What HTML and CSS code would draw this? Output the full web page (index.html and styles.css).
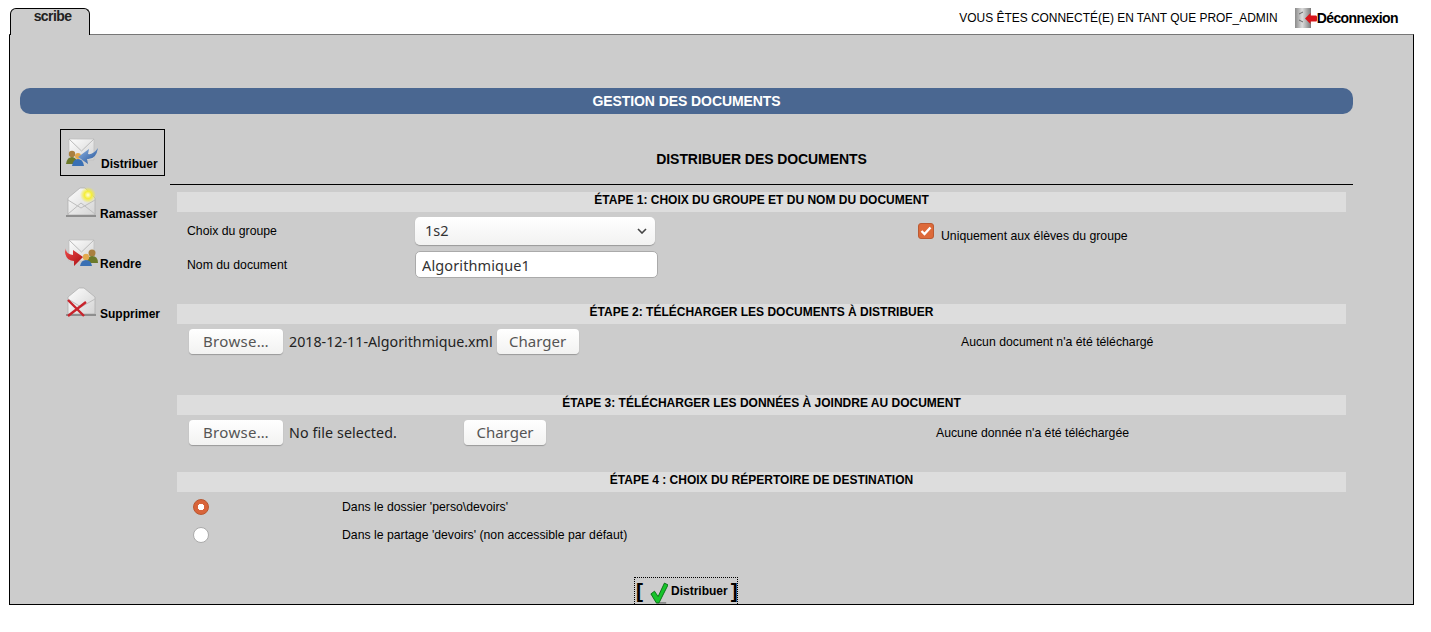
FILE: index.html
```html
<!DOCTYPE html>
<html lang="fr">
<head>
<meta charset="utf-8">
<title>Gestion des documents</title>
<link rel="stylesheet" href="styles.css">
</head>
<body>
<svg class="defs" width="0" height="0" aria-hidden="true">
  <defs>
    <linearGradient id="env" x1="0" y1="0" x2="1" y2="1"><stop offset="0" stop-color="#fdfdfd"/><stop offset="1" stop-color="#d4d4d4"/></linearGradient>
    <linearGradient id="blue" x1="0" y1="0" x2="1" y2="1"><stop offset="0" stop-color="#8fb4e2"/><stop offset="1" stop-color="#1f4f96"/></linearGradient>
    <linearGradient id="red" x1="0" y1="0" x2="1" y2="1"><stop offset="0" stop-color="#ee4a4a"/><stop offset="1" stop-color="#a80f12"/></linearGradient>
    <linearGradient id="door" x1="0" y1="0" x2="1" y2="0"><stop offset="0" stop-color="#8a8a8a"/><stop offset=".45" stop-color="#dcdcdc"/><stop offset="1" stop-color="#7a7a7a"/></linearGradient>
    <radialGradient id="star"><stop offset="0" stop-color="#fffde0"/><stop offset=".45" stop-color="#f5ee3a"/><stop offset="1" stop-color="#f5ee3a" stop-opacity="0"/></radialGradient>
  </defs>
</svg>
<header class="top">
  <div class="tab">scribe</div>
  <div class="user">
    <span class="connected">VOUS ÊTES CONNECTÉ(E) EN TANT QUE PROF_ADMIN</span>
    <a class="logout" href="#">
      <svg width="22" height="21" viewBox="0 0 22 21">
        <rect x="0" y="0" width="16" height="20" fill="url(#door)"/>
        <path d="M4 12 L8 14 M4 6 L8 4" stroke="#666" stroke-width="1"/>
        <path d="M10 10.5 L15.5 5 V7.5 H21 Q22 7.5 22 9 V12 Q22 13.5 21 13.5 H15.5 V16Z" fill="#d7141a"/>
      </svg><span>Déconnexion</span>
    </a>
  </div>
</header>
<main class="panel">
  <h1 class="banner">GESTION DES DOCUMENTS</h1>
  <div class="columns">
    <nav class="side">
      <a class="side-item active" href="#">
        <svg width="34" height="30" viewBox="0 0 34 30">
          <path d="M3 1 H28 V22 H3Z" fill="url(#env)" stroke="#bbb" stroke-width=".7"/>
          <path d="M3 1 L15.5 13 L28 1" fill="none" stroke="#bbb"/>
          <circle cx="6" cy="16" r="3.2" fill="#a9803f"/><path d="M0 26 Q1 19 6 19 Q11 19 11 26Z" fill="#6c7a2a"/>
          <circle cx="12" cy="18" r="3" fill="#e2a94e"/><path d="M6 28 Q7 21 12 21 Q17 21 18 28Z" fill="#3a70b4"/>
          <path d="M32 10 Q30 22 21 21 L22 26 L12 19 L23 11 L22 16 Q27 17 32 10Z" fill="url(#blue)"/>
        </svg>
        <span>Distribuer</span>
      </a>
      <a class="side-item" href="#">
        <svg width="34" height="32" viewBox="0 0 34 32">
          <path d="M3 11 L15 1 H20 L30 11 V28 H3Z" fill="url(#env)" stroke="#aaa" stroke-width=".7"/>
          <path d="M3 27 L16 16 L30 27 M3 13 L16 21 L30 13" fill="none" stroke="#bdbdbd"/>
          <rect x="1" y="28" width="30" height="2" fill="#8e8e8e"/>
          <circle cx="23" cy="8" r="8" fill="url(#star)"/>
        </svg>
        <span>Ramasser</span>
      </a>
      <a class="side-item" href="#">
        <svg width="34" height="30" viewBox="0 0 34 30">
          <path d="M4 1 H29 V22 H4Z" fill="url(#env)" stroke="#bbb" stroke-width=".7"/>
          <path d="M4 1 L16.5 13 L29 1" fill="none" stroke="#bbb"/>
          <circle cx="27" cy="14" r="3.5" fill="#a9803f"/><path d="M22 24 Q22 17 27 17 Q33 17 33 24Z" fill="#6c7a2a"/>
          <circle cx="21" cy="18" r="3.2" fill="#e2a94e"/><path d="M15 27 Q16 21 21 21 Q26 21 27 27Z" fill="#3a70b4"/>
          <path d="M1 9 Q0 15 8 16 L8 11 L18 18 L9 27 L9 22 Q1 22 0 13Z" fill="url(#red)"/>
        </svg>
        <span>Rendre</span>
      </a>
      <a class="side-item" href="#">
        <svg width="34" height="32" viewBox="0 0 34 32">
          <path d="M3 10 L14 1 H19 L30 10 V27 H3Z" fill="url(#env)" stroke="#aaa" stroke-width=".7"/>
          <path d="M3 12 L16 20 L30 12" fill="none" stroke="#bdbdbd"/>
          <rect x="1" y="27" width="30" height="2" fill="#8e8e8e"/>
          <path d="M3 13 L19 29 M3 29 L21 15" stroke="#c8242c" stroke-width="2.4"/>
        </svg>
        <span>Supprimer</span>
      </a>
    </nav>
    <section class="content">
      <h2 class="title">DISTRIBUER DES DOCUMENTS</h2>
      <div class="steps">
        <div class="step step-1">
          <h3 class="band">ÉTAPE 1: CHOIX DU GROUPE ET DU NOM DU DOCUMENT</h3>
          <div class="group-grid">
            <div class="form-left">
              <div class="form-row form-row-select">
                <label class="lbl">Choix du groupe</label>
                <div class="select-wrap">
                  <select class="control select"><option>1s2</option></select>
                  <svg class="chevron" width="10" height="6" viewBox="0 0 10 6"><path d="M1 1 L5 5 L9 1" fill="none" stroke="#444" stroke-width="1.6"/></svg>
                </div>
              </div>
              <div class="form-row">
                <label class="lbl">Nom du document</label>
                <input class="control text" type="text" value="Algorithmique1">
              </div>
            </div>
            <div class="only">
              <span class="checkbox"><svg width="12" height="10" viewBox="0 0 12 10"><path d="M1.5 5 L4.5 8 L10.5 1.5" fill="none" stroke="#fff" stroke-width="2.4"/></svg></span>
              <span class="small only-text">Uniquement aux élèves du groupe</span>
            </div>
          </div>
        </div>
        <div class="step step-2">
          <h3 class="band">ÉTAPE 2: TÉLÉCHARGER LES DOCUMENTS À DISTRIBUER</h3>
          <div class="file-row">
            <button class="btn browse" type="button">Browse…</button>
            <span class="file-name">2018-12-11-Algorithmique.xml</span>
            <button class="btn charger" type="button">Charger</button>
            <span class="small status status-2">Aucun document n'a été téléchargé</span>
          </div>
        </div>
        <div class="step step-3">
          <h3 class="band">ÉTAPE 3: TÉLÉCHARGER LES DONNÉES À JOINDRE AU DOCUMENT</h3>
          <div class="file-row">
            <button class="btn browse" type="button">Browse…</button>
            <span class="file-name file-none">No file selected.</span>
            <button class="btn charger" type="button">Charger</button>
            <span class="small status status-3">Aucune donnée n'a été téléchargée</span>
          </div>
        </div>
        <div class="step step-4">
          <h3 class="band">ÉTAPE 4 : CHOIX DU RÉPERTOIRE DE DESTINATION</h3>
          <div class="radio-row radio-first"><span class="radio on"></span><span class="small">Dans le dossier 'perso\devoirs'</span></div>
          <div class="radio-row"><span class="radio"></span><span class="small">Dans le partage 'devoirs' (non accessible par défaut)</span></div>
        </div>
      </div>
    </section>
  </div>
  <div class="submit-wrap">
    <a class="submit" href="#">
      <span class="bracket">[</span>
      <svg width="18" height="22" viewBox="0 0 20 24"><rect x="7" y="22" width="11" height="2" fill="#8a8a8a"/><path d="M1 13 L5 10 L9 16 L16 1 L20 3 L10 23 H7Z" fill="#16c42a" stroke="#0a6b15" stroke-width="1"/></svg>
      <span class="submit-label">Distribuer</span>
      <span class="bracket">]</span>
    </a>
  </div>
</main>
</body>
</html>
```
FILE: styles.css
```css
* { box-sizing: border-box; }
html, body { margin: 0; padding: 0; background: #fff; }
body { font-family: "Liberation Sans", Arial, sans-serif; color: #000; height: 632px; overflow: hidden; }
.defs { display: block; height: 0; }
a { color: inherit; text-decoration: none; }

.top { height: 34px; padding: 8px 33px 0 10px; display: flex; justify-content: space-between; align-items: flex-start; }
.tab {
  width: 80px; height: 27px; background: #ccc; color: #222;
  border: 1px solid #000; border-bottom: 0; border-radius: 6px 6px 0 0;
  padding-left: 5px;
  font-size: 14px; font-weight: bold; letter-spacing: -0.6px; text-align: center; line-height: 15px; position: relative; z-index: 1;
}
.user { display: flex; align-items: center; height: 20px; font-size: 11.95px; }
.connected { margin-right: 17px; }
.logout { display: flex; align-items: center; font-size: 14px; font-weight: bold; letter-spacing: -0.6px; }

.panel {
  width: 1405px; height: 571px; margin-left: 9px; background: #ccc;
  border: 1px solid #000; border-top: 1px solid #777;
  padding: 53px 10px 0;
  position: relative;
}
.banner {
  width: 1333px; height: 26px; margin: 0; background: #4a6791; border-radius: 10px;
  color: #fff; font-size: 14px; line-height: 26px; text-align: center; font-weight: bold; letter-spacing: -0.08px;
}
.columns { display: flex; margin-top: 15px; }
.side { width: 105px; margin-left: 40px; display: flex; flex-direction: column; font-size: 12px; font-weight: bold; }
.side-item { display: flex; align-items: flex-end; width: 105px; height: 50px; padding-left: 5px; }
.side-item svg { flex: none; margin-bottom: 3px; }
.side-item span { margin-left: 1px; padding-bottom: 1px; white-space: nowrap; }
.side-item.active { border: 1px solid #000; height: 47px; padding-bottom: 3px; }
.side-item.active svg { margin-bottom: 4px; }
.side-item:nth-child(2) { height: 46px; }
.content { width: 1183px; margin-left: 5px; }
.title { margin: 0; height: 56px; border-bottom: 1px solid #000; font-size: 14px; line-height: 60px; text-align: center; font-weight: bold; letter-spacing: -0.08px; }
.steps { padding: 7px 7px 0; }
.band { margin: 0; height: 20px; background: #ddd; font-size: 12px; line-height: 16px; text-align: center; font-weight: bold; }
.small { font-size: 12.25px; }

.step-1 { height: 112px; }
.step-2 { height: 91px; }
.step-3 { height: 77px; }

.group-grid { display: flex; }
.form-left { width: 741px; padding: 5px 0 0 10px; }
.form-row { display: flex; align-items: center; }
.form-row-select { margin-bottom: 6px; }
.lbl { width: 228px; font-size: 12.25px; flex: none; }
.control { font-family: "Noto Sans", sans-serif; font-size: 14.5px; color: #333; background: #fff; border-radius: 5px; }
.select-wrap { position: relative; width: 240px; height: 28px; }
.select { width: 240px; height: 28px; appearance: none; -webkit-appearance: none; border: 0; box-shadow: 0 1px 1px #999; padding: 0 10px 2px; background: linear-gradient(#fff, #f2f2f1); }
.chevron { position: absolute; right: 8px; top: 11px; }
.text { width: 243px; height: 27px; border: 1px solid #aaa; padding: 0 6px; letter-spacing: .12px; }
.only { display: flex; align-items: flex-start; padding-top: 11px; }
.checkbox { width: 16px; height: 16px; border-radius: 3px; background: #dd6a3a; border: 1px solid #bb5a33; display: flex; align-items: center; justify-content: center; margin-right: 7px; flex: none; }
.only-text { margin-top: 6px; }

.file-row { display: flex; align-items: center; height: 26px; margin-top: 4px; padding-left: 12px; position: relative; }
.btn { font-family: "Noto Sans", sans-serif; font-size: 15px; color: #555; border: 0; border-radius: 4px; background: linear-gradient(#fff, #f2f2f1); box-shadow: 0 1px 1px #999; height: 25px; padding: 0; flex: none; }
.browse { width: 94px; letter-spacing: .35px; }
.charger { width: 82px; }
.file-name { font-family: "Noto Sans", sans-serif; font-size: 14.25px; color: #222; margin: 0 4px 0 6px; white-space: nowrap; }
.file-none { width: 171px; letter-spacing: .1px; }
.status { position: absolute; white-space: nowrap; top: 7px; }
.status-2 { left: 784px; }
.status-3 { left: 759px; }

.radio-row { display: flex; align-items: center; height: 28px; padding-left: 16px; }
.radio-first { margin-top: 1px; }
.radio { width: 16px; height: 16px; border-radius: 50%; background: #fff; border: 1px solid #aaa; margin-right: 133px; flex: none; }
.radio.on { background: radial-gradient(circle, #fff 0 3px, #d8643a 3.5px); border-color: #b9572f; }

.submit-wrap { position: absolute; left: 624px; top: 542px; }
.submit { display: flex; align-items: center; width: 104px; height: 27px; border: 1px dotted #000; border-bottom: 0; padding: 0 1px; font-size: 12px; font-weight: bold; }
.bracket { font-size: 21px; line-height: 22px; color: #000; }
.submit svg { margin: 3px 3px 0 7px; flex: none; }
.submit-label { margin-right: 3px; }
```
